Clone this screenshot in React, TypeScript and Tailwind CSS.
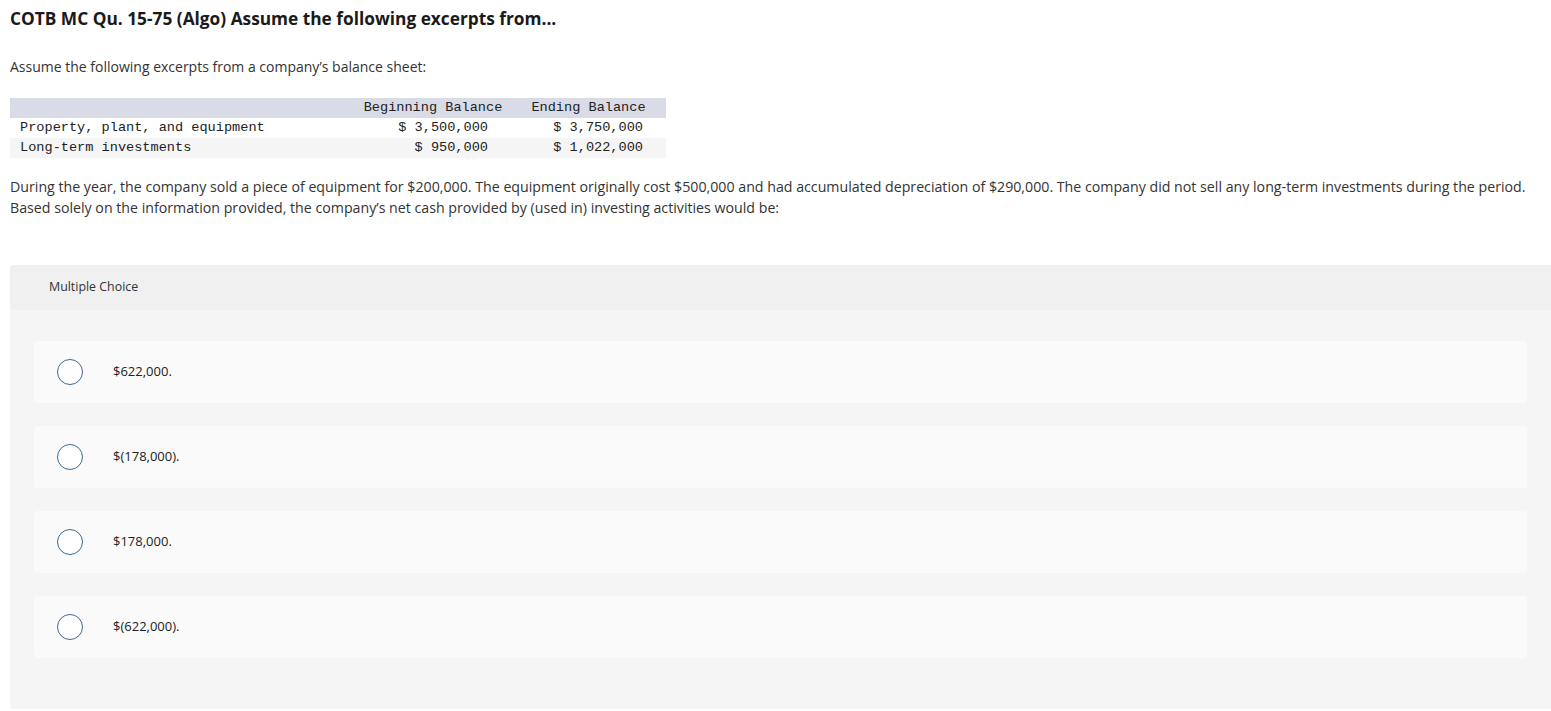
import React from 'react';

const sans = "font-['Open_Sans','Lato',sans-serif]";
const mono = "font-['Liberation_Mono','DejaVu_Sans_Mono',monospace]";

const rows = [
  { label: 'Property, plant, and equipment', begin: '$ 3,500,000', end: '$ 3,750,000' },
  { label: 'Long-term investments', begin: '$ 950,000', end: '$ 1,022,000' },
];

const choices = ['$622,000.', '$(178,000).', '$178,000.', '$(622,000).'];

const Radio = () => (
  <span className="block w-[26px] h-[26px] rounded-full border-[1.5px] border-[#3d6896] bg-white shrink-0" />
);

export default function App() {
  return (
    <div className={`${sans} bg-white min-h-[711px] text-[#1a1a1a]`}>
      <h1 className="pl-[10px] pt-[8px] text-[17.3px] leading-[22px] font-bold text-[#1a1a1a]">
        COTB MC Qu. 15-75 (Algo) Assume the following excerpts from...
      </h1>

      <p className="pl-[10px] mt-[27px] text-[14px] leading-[20px] text-[#333]">
        Assume the following excerpts from a company’s balance sheet:
      </p>

      <table className={`${mono} ml-[10px] mt-[21px] text-[13.6px] leading-[20px] text-[#222] border-collapse`}>
        <thead>
          <tr className="bg-[#d9dce6]">
            <th className="w-[345px]" />
            <th className="w-[156px] font-normal text-center">Beginning Balance</th>
            <th className="w-[155px] font-normal text-center">Ending Balance</th>
          </tr>
        </thead>
        <tbody>
          {rows.map((r, i) => (
            <tr key={r.label} className={i % 2 === 0 ? 'bg-white' : 'bg-[#f5f5f5]'}>
              <td className="pl-[10px] text-left">{r.label}</td>
              <td className="pr-[23px] text-right">{r.begin}</td>
              <td className="pr-[23px] text-right">{r.end}</td>
            </tr>
          ))}
        </tbody>
      </table>

      <p className="pl-[10px] pr-[5px] mt-[18px] text-[14.2px] leading-[21px] text-[#333]">
        During the year, the company sold a piece of equipment for $200,000. The equipment originally cost $500,000 and
        had accumulated depreciation of $290,000. The company did not sell any long-term investments during the period.
        Based solely on the information provided, the company’s net cash provided by (used in) investing activities
        would be:
      </p>

      <div className="ml-[10px] mt-[47px] rounded-l-[3px] bg-[#f5f5f5] pb-[51px]">
        <div className="h-[45px] flex items-center pl-[39px] bg-[#f0f0f0] rounded-tl-[3px] text-[12.4px] text-[#333]">
          Multiple Choice
        </div>
        <div className="flex flex-col gap-[23px] px-[24px] pt-[31px]">
          {choices.map((c) => (
            <div key={c} className="h-[62px] flex items-center bg-[#fafafa] rounded-[4px] pl-[23px]">
              <Radio />
              <span className="ml-[30px] text-[13px] text-[#222]">{c}</span>
            </div>
          ))}
        </div>
      </div>
    </div>
  );
}
